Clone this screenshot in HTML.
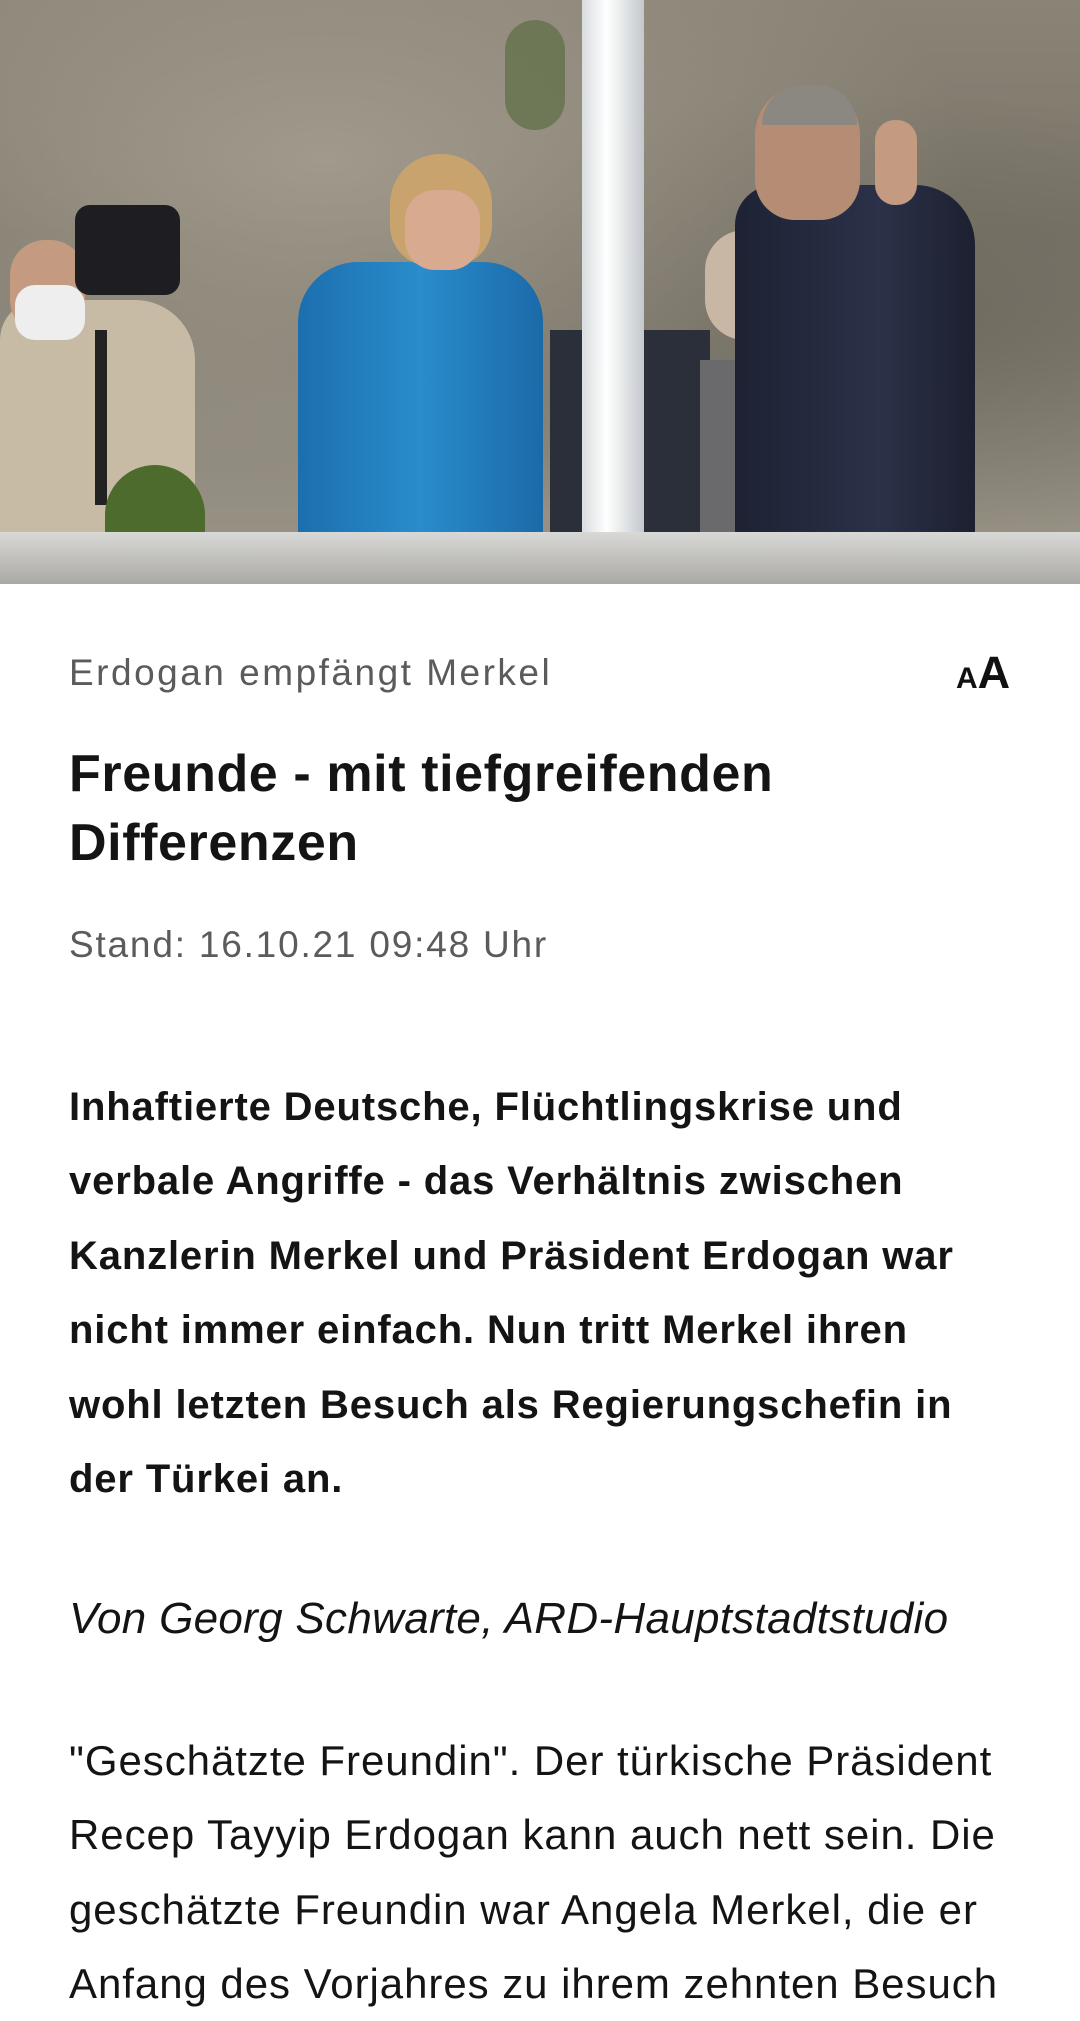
<!DOCTYPE html>
<html><head><meta charset="utf-8"><style>
body{margin:0;width:1080px;height:2009px;overflow:hidden;background:#fff;position:relative;font-family:"Liberation Sans",sans-serif;color:#141414}
.a{position:absolute;left:69px;white-space:nowrap}
.img{position:absolute;left:0;top:0;width:1080px;height:584px;overflow:hidden;background:linear-gradient(180deg,#8a8376 0%,#7b766a 40%,#8d887c 70%,#9a9587 100%)}
.img div{position:absolute}
</style></head><body>
<div class="img">
  <div style="left:0;top:0;width:1080px;height:530px;background:radial-gradient(ellipse at 30% 30%,#a19a8c,transparent 60%),radial-gradient(ellipse at 80% 60%,#6e695e,transparent 50%)"></div>
  <div style="left:505px;top:20px;width:60px;height:110px;background:#5d6e45;border-radius:30px;opacity:.7"></div>
  <div style="left:0;top:300px;width:195px;height:232px;background:#c8bba6;border-radius:40px 60px 0 0"></div>
  <div style="left:10px;top:240px;width:75px;height:95px;background:#c49a80;border-radius:35px"></div>
  <div style="left:15px;top:285px;width:70px;height:55px;background:#eee;border-radius:20px"></div>
  <div style="left:75px;top:205px;width:105px;height:90px;background:#1e1e22;border-radius:15px"></div>
  <div style="left:95px;top:330px;width:12px;height:175px;background:#222"></div>
  <div style="left:105px;top:465px;width:100px;height:70px;background:#4d6b2c;border-radius:50px 50px 0 0"></div>
  <div style="left:298px;top:262px;width:245px;height:272px;background:linear-gradient(90deg,#1c6fae,#2a8ccc 50%,#1b6aa8);border-radius:60px 60px 0 0"></div>
  <div style="left:390px;top:154px;width:102px;height:112px;background:#c9a36d;border-radius:50px 50px 40px 40px"></div>
  <div style="left:405px;top:190px;width:75px;height:80px;background:#d8aa90;border-radius:30px"></div>
  <div style="left:550px;top:330px;width:160px;height:204px;background:#2b2f3a"></div>
  <div style="left:705px;top:230px;width:85px;height:110px;background:#c9b7a5;border-radius:40px"></div>
  <div style="left:700px;top:360px;width:60px;height:174px;background:#6a6a6c"></div>
  <div style="left:582px;top:0;width:62px;height:534px;background:linear-gradient(90deg,#d9dde0,#fff 40%,#c4c8cc)"></div>
  <div style="left:735px;top:185px;width:240px;height:349px;background:linear-gradient(90deg,#1d2233,#2b3148 60%,#1c2030);border-radius:40px 60px 0 0"></div>
  <div style="left:755px;top:85px;width:105px;height:135px;background:#b48d74;border-radius:50px 50px 40px 40px"></div>
  <div style="left:762px;top:85px;width:95px;height:40px;background:#8a8880;border-radius:50px 50px 0 0"></div>
  <div style="left:875px;top:120px;width:42px;height:85px;background:#c49a80;border-radius:20px"></div>
  <div style="left:0;top:532px;width:1080px;height:52px;background:linear-gradient(180deg,#d8d8d6,#bdbcb9 60%,#a9a8a5)"></div>
</div>
<div class="a" style="top:649px;font-size:37px;line-height:48px;color:#5b5b5b;letter-spacing:2.5px">Erdogan empfängt Merkel</div>
<div style="position:absolute;left:956px;top:650px;font-weight:bold;color:#111;white-space:nowrap;line-height:46px"><span style="font-size:30px">A</span><span style="font-size:45px">A</span></div>
<div class="a" style="top:740px;font-size:52px;line-height:69px;font-weight:bold;letter-spacing:0.6px">Freunde - mit tiefgreifenden<br>Differenzen</div>
<div class="a" style="top:921px;font-size:37px;line-height:48px;color:#5b5b5b;letter-spacing:1.8px">Stand: 16.10.21 09:48 Uhr</div>
<div class="a" style="top:1070px;font-size:40px;line-height:74.4px;font-weight:bold;letter-spacing:0.85px">Inhaftierte Deutsche, Flüchtlingskrise und<br>verbale Angriffe - das Verhältnis zwischen<br>Kanzlerin Merkel und Präsident Erdogan war<br>nicht immer einfach. Nun tritt Merkel ihren<br>wohl letzten Besuch als Regierungschefin in<br>der Türkei an.</div>
<div class="a" style="top:1587px;font-size:44px;line-height:64px;font-style:italic;letter-spacing:0.3px">Von Georg Schwarte, ARD-Hauptstadtstudio</div>
<div class="a" style="top:1724px;font-size:42px;line-height:74.3px;letter-spacing:0.95px">"Geschätzte Freundin". Der türkische Präsident<br>Recep Tayyip Erdogan kann auch nett sein. Die<br>geschätzte Freundin war Angela Merkel, die er<br>Anfang des Vorjahres zu ihrem zehnten Besuch</div>
</body></html>
